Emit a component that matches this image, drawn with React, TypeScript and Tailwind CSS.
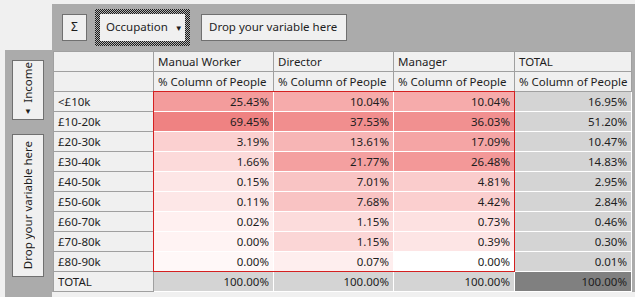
const FONT = "font-['Noto_Sans',sans-serif]"

type Row = {
  label: string
  cells: [string, string][]
  total: string
}

// crosstab body: value + heat colour for each occupation column
const rows: Row[] = [
  { label: "<£10k", cells: [["25.43%", "bg-[#f39c9c]"], ["10.04%", "bg-[#f6abab]"], ["10.04%", "bg-[#f6abab]"]], total: "16.95%" },
  { label: "£10-20k", cells: [["69.45%", "bg-[#ef8282]"], ["37.53%", "bg-[#f18e8e]"], ["36.03%", "bg-[#f19090]"]], total: "51.20%" },
  { label: "£20-30k", cells: [["3.19%", "bg-[#fbd0d0]"], ["13.61%", "bg-[#f7b5b5]"], ["17.09%", "bg-[#f5a5a5]"]], total: "10.47%" },
  { label: "£30-40k", cells: [["1.66%", "bg-[#fcdada]"], ["21.77%", "bg-[#f4a0a0]"], ["26.48%", "bg-[#f39898]"]], total: "14.83%" },
  { label: "£40-50k", cells: [["0.15%", "bg-[#fde6e6]"], ["7.01%", "bg-[#f9c4c4]"], ["4.81%", "bg-[#facccc]"]], total: "2.95%" },
  { label: "£50-60k", cells: [["0.11%", "bg-[#fde7e7]"], ["7.68%", "bg-[#f9c3c3]"], ["4.42%", "bg-[#fbcfcf]"]], total: "2.84%" },
  { label: "£60-70k", cells: [["0.02%", "bg-[#fff0f0]"], ["1.15%", "bg-[#fcdcdc]"], ["0.73%", "bg-[#fde1e1]"]], total: "0.46%" },
  { label: "£70-80k", cells: [["0.00%", "bg-[#fff3f3]"], ["1.15%", "bg-[#fbd6d6]"], ["0.39%", "bg-[#fde5e5]"]], total: "0.30%" },
  { label: "£80-90k", cells: [["0.00%", "bg-[#fff8f8]"], ["0.07%", "bg-[#feeeee]"], ["0.00%", "bg-[#ffffff]"]], total: "0.01%" },
]

const columns = ["Manual Worker", "Director", "Manager", "TOTAL"]

function HeadCell({ children }: { children: React.ReactNode }) {
  return (
    <div className="h-[20px] bg-[#f0f0f0] border-r border-b border-[#a0a0a0] pl-[4px] leading-[19px] whitespace-nowrap overflow-hidden">
      {children}
    </div>
  )
}

function ValueCell({ value, bg }: { value: string; bg: string }) {
  return (
    <div className={`h-[20px] ${bg} border-r border-b border-white pr-[4px] text-right leading-[19px]`}>
      {value}
    </div>
  )
}

export default function App() {
  return (
    <div className={`w-[635px] h-[297px] bg-[#f0f0f0] overflow-hidden text-[11.5px] text-[#1e1e1e] ${FONT}`}>
      {/* column drop zone */}
      <div className="flex pt-[4px]">
        <div className="w-[52px]" />
        <div className="flex-1 h-[46px] bg-[#ababab] flex items-center pl-[10px] gap-[8px]">
          <div className="w-[25px] h-[27px] bg-[#f0f0f0] border border-[#707070] flex items-center justify-center text-[12px]">Σ</div>
          <div className="p-[5px] bg-[repeating-conic-gradient(#1a1a1a_0_25%,#b4b4b4_0_50%)] [background-size:2px_2px]">
            <div className="w-[85px] h-[27px] bg-[#f0f0f0] flex items-center pl-[6px] gap-[7px]">
              <span>Occupation</span>
              <span className="text-[8px] mt-[1px]">▼</span>
            </div>
          </div>
          <div className="w-[146px] h-[27px] ml-[3px] bg-[#f0f0f0] border border-[#707070] flex items-center pl-[7px]">Drop your variable here</div>
        </div>
      </div>

      <div className="flex h-[247px]">
        {/* row drop zone */}
        <div className="ml-[5px] w-[47px] bg-[#ababab] flex flex-col items-center pt-[10px] pr-[1px] gap-[14px]">
          <div className="w-[32px] h-[60px] bg-[#f0f0f0] border border-[#707070] flex flex-col items-center justify-end pb-[4px]">
            <span className="[writing-mode:vertical-rl] rotate-180 leading-[12px]">Income</span>
            <span className="text-[8px] leading-[8px] mt-[4px]">▼</span>
          </div>
          <div className="w-[32px] h-[143px] bg-[#f0f0f0] border border-[#707070] flex items-end justify-center pb-[7px]">
            <span className="[writing-mode:vertical-rl] rotate-180 whitespace-nowrap leading-[12px]">Drop your variable here</span>
          </div>
        </div>

        {/* crosstab */}
        <div className="flex-1 flex flex-col">
          <div className="flex bg-[#ababab]">
            <div className="relative ml-[1px] mt-[1px] bg-[#f0f0f0] grid grid-cols-[100px_120px_120px_121px_117px] border-t border-l border-[#a0a0a0]">
              <HeadCell>{""}</HeadCell>
              {columns.map((c) => (
                <HeadCell key={c}>{c}</HeadCell>
              ))}
              <HeadCell>{""}</HeadCell>
              {columns.map((c) => (
                <HeadCell key={c + "-m"}>% Column of People</HeadCell>
              ))}
              {rows.map((r) => (
                <>
                  <HeadCell key={r.label}>{r.label}</HeadCell>
                  {r.cells.map(([v, bg], i) => (
                    <ValueCell key={r.label + i} value={v} bg={bg} />
                  ))}
                  <ValueCell key={r.label + "-t"} value={r.total} bg="bg-[#d4d4d4]" />
                </>
              ))}
              <HeadCell>TOTAL</HeadCell>
              <ValueCell value="100.00%" bg="bg-[#d4d4d4]" />
              <ValueCell value="100.00%" bg="bg-[#d4d4d4]" />
              <ValueCell value="100.00%" bg="bg-[#d4d4d4]" />
              <ValueCell value="100.00%" bg="bg-[#808080]" />
              {/* selected range outline */}
              <div className="absolute left-[99px] top-[39px] w-[362px] h-[181px] border border-[#d42020] pointer-events-none" />
            </div>
          </div>
          <div className="flex-1 bg-[#f0f0f0]" />
        </div>
      </div>
    </div>
  )
}
